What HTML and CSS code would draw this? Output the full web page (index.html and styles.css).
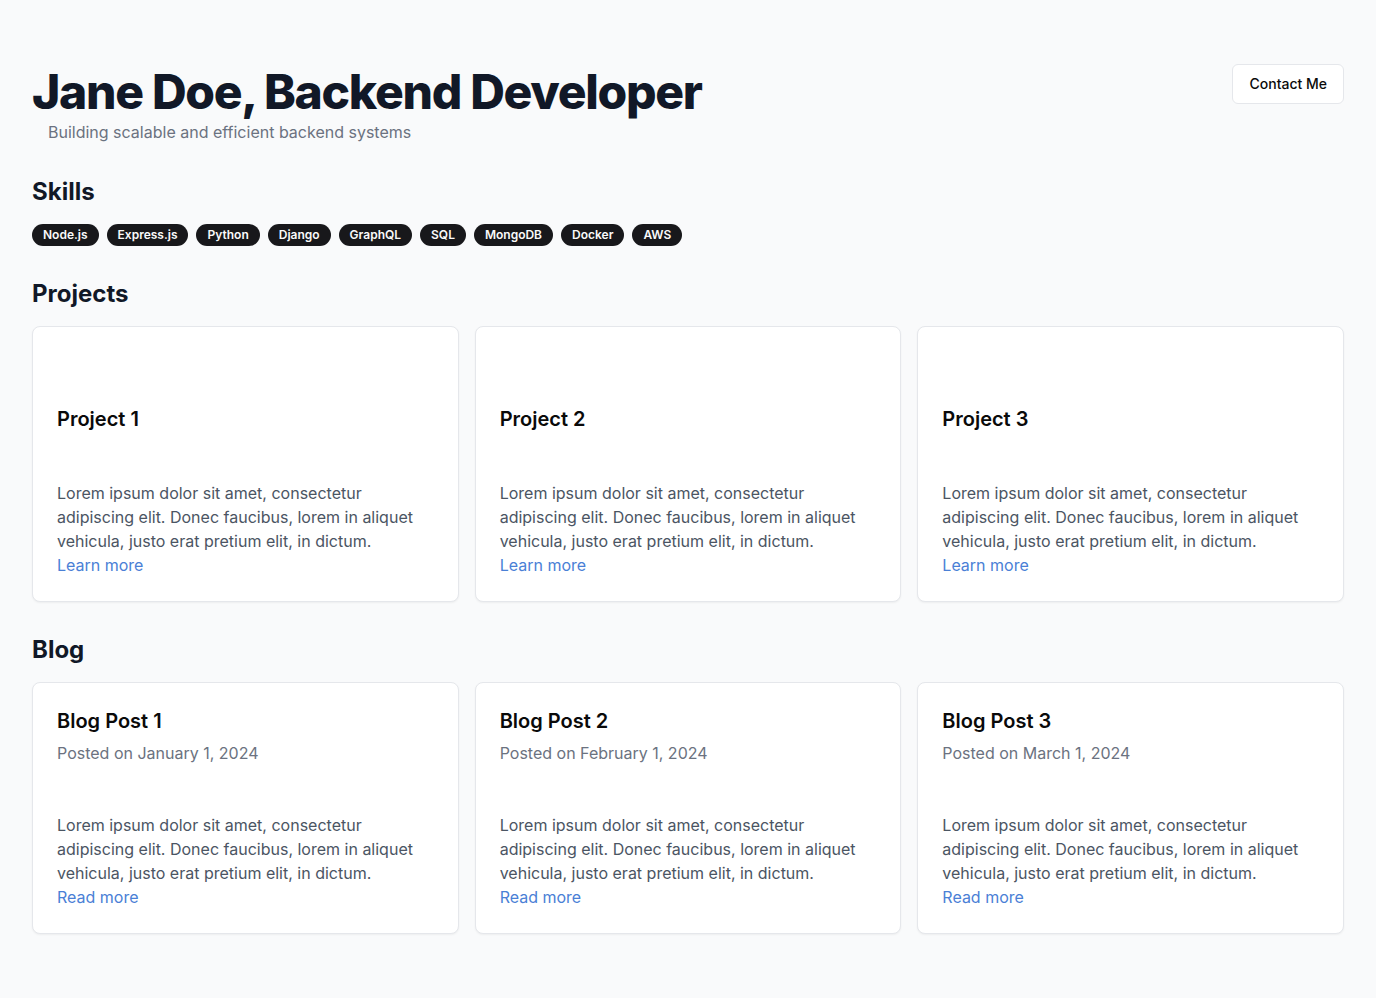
FILE: index.html
```html
<!DOCTYPE html>
<html lang="en">
<head>
<meta charset="utf-8">
<title>Jane Doe, Backend Developer</title>
<link rel="stylesheet" href="styles.css">
</head>
<body>
<main class="page">
  <header class="hero">
    <div class="hero-text">
      <h1 class="hero-title">Jane Doe, Backend Developer</h1>
      <p class="hero-sub">Building scalable and efficient backend systems</p>
    </div>
    <button class="btn-outline">Contact Me</button>
  </header>

  <section class="section">
    <h2 class="section-title">Skills</h2>
    <div class="badges">
      <span class="badge">Node.js</span>
      <span class="badge">Express.js</span>
      <span class="badge">Python</span>
      <span class="badge">Django</span>
      <span class="badge">GraphQL</span>
      <span class="badge">SQL</span>
      <span class="badge">MongoDB</span>
      <span class="badge">Docker</span>
      <span class="badge">AWS</span>
    </div>
  </section>

  <section class="section">
    <h2 class="section-title">Projects</h2>
    <div class="grid">
      <article class="card">
        <div class="card-header">
          <div class="card-media"></div>
          <h3 class="card-title">Project 1</h3>
        </div>
        <div class="card-content">
          <p class="card-text">Lorem ipsum dolor sit amet, consectetur adipiscing elit. Donec faucibus, lorem in aliquet vehicula, justo erat pretium elit, in dictum.</p>
          <a class="card-link" href="#">Learn more</a>
        </div>
      </article>
      <article class="card">
        <div class="card-header">
          <div class="card-media"></div>
          <h3 class="card-title">Project 2</h3>
        </div>
        <div class="card-content">
          <p class="card-text">Lorem ipsum dolor sit amet, consectetur adipiscing elit. Donec faucibus, lorem in aliquet vehicula, justo erat pretium elit, in dictum.</p>
          <a class="card-link" href="#">Learn more</a>
        </div>
      </article>
      <article class="card">
        <div class="card-header">
          <div class="card-media"></div>
          <h3 class="card-title">Project 3</h3>
        </div>
        <div class="card-content">
          <p class="card-text">Lorem ipsum dolor sit amet, consectetur adipiscing elit. Donec faucibus, lorem in aliquet vehicula, justo erat pretium elit, in dictum.</p>
          <a class="card-link" href="#">Learn more</a>
        </div>
      </article>
    </div>
  </section>

  <section class="section">
    <h2 class="section-title">Blog</h2>
    <div class="grid">
      <article class="card">
        <div class="card-header">
          <h3 class="card-title">Blog Post 1</h3>
          <p class="card-date">Posted on January 1, 2024</p>
        </div>
        <div class="card-content">
          <p class="card-text">Lorem ipsum dolor sit amet, consectetur adipiscing elit. Donec faucibus, lorem in aliquet vehicula, justo erat pretium elit, in dictum.</p>
          <a class="card-link" href="#">Read more</a>
        </div>
      </article>
      <article class="card">
        <div class="card-header">
          <h3 class="card-title">Blog Post 2</h3>
          <p class="card-date">Posted on February 1, 2024</p>
        </div>
        <div class="card-content">
          <p class="card-text">Lorem ipsum dolor sit amet, consectetur adipiscing elit. Donec faucibus, lorem in aliquet vehicula, justo erat pretium elit, in dictum.</p>
          <a class="card-link" href="#">Read more</a>
        </div>
      </article>
      <article class="card">
        <div class="card-header">
          <h3 class="card-title">Blog Post 3</h3>
          <p class="card-date">Posted on March 1, 2024</p>
        </div>
        <div class="card-content">
          <p class="card-text">Lorem ipsum dolor sit amet, consectetur adipiscing elit. Donec faucibus, lorem in aliquet vehicula, justo erat pretium elit, in dictum.</p>
          <a class="card-link" href="#">Read more</a>
        </div>
      </article>
    </div>
  </section>
</main>
</body>
</html>
```

FILE: styles.css
```css
* { box-sizing: border-box; }
html, body { margin: 0; padding: 0; }
body {
  background: #f9fafb;
  font-family: Inter, "Noto Sans", sans-serif;
  color: #111827;
}
.page {
  padding: 64px 32px 32px;
}
.hero {
  display: flex;
  justify-content: space-between;
  align-items: flex-start;
  margin-bottom: 32px;
}
.hero-title {
  margin: 0;
  font-size: 48px;
  line-height: 56px;
  font-weight: 800;
  letter-spacing: -0.027em;
  color: #111827;
}
.hero-sub {
  margin: 0 0 0 16px;
  font-size: 16px;
  line-height: 24px;
  color: #6b7280;
}
.btn-outline {
  font-family: inherit;
  font-size: 14px;
  font-weight: 500;
  line-height: 20px;
  color: #0a0a0a;
  background: #ffffff;
  border: 1px solid #e5e7eb;
  border-radius: 6px;
  padding: 9px 16px;
  height: 40px;
}
.section { margin-bottom: 32px; }
.section-title {
  margin: 0 0 16px;
  font-size: 24px;
  line-height: 32px;
  font-weight: 700;
  color: #111827;
}
.badges {
  display: flex;
  flex-wrap: wrap;
  gap: 8px;
}
.badge {
  display: inline-flex;
  align-items: center;
  background: #18181b;
  color: #fafafa;
  border: 1px solid transparent;
  border-radius: 9999px;
  padding: 2px 10px;
  font-size: 12px;
  line-height: 16px;
  font-weight: 600;
}
.grid {
  display: grid;
  grid-template-columns: repeat(3, 1fr);
  gap: 16px;
}
.card {
  background: #ffffff;
  border: 1px solid #e5e7eb;
  border-radius: 8px;
  box-shadow: 0 1px 2px rgba(0,0,0,0.05);
  display: flex;
  flex-direction: column;
}
.card-header {
  padding: 24px;
  display: flex;
  flex-direction: column;
  gap: 6px;
}
.card-media { height: 48px; }
.card-title {
  margin: 0;
  font-size: 20px;
  line-height: 28px;
  font-weight: 600;
  color: #0a0a0a;
}
.card-date {
  margin: 0;
  font-size: 16px;
  line-height: 24px;
  color: #6b7280;
}
.card-content {
  padding: 24px;
}
.card-text {
  margin: 0;
  font-size: 16px;
  line-height: 24px;
  color: #4b5563;
}
.card-link {
  display: inline-block;
  font-size: 16px;
  line-height: 24px;
  color: #4a80d6;
  text-decoration: none;
}
```
